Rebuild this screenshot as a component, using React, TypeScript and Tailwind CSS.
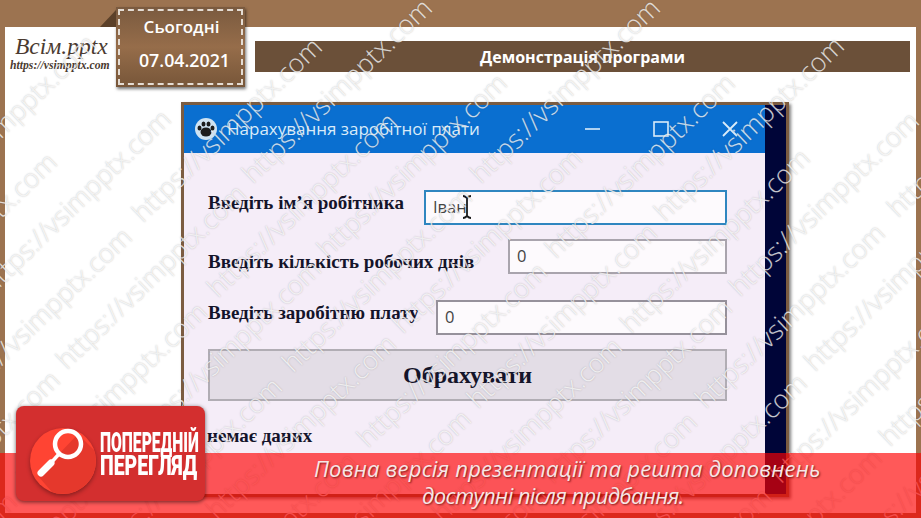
const serif = "font-['Liberation_Serif',serif]";

// two interleaved sets of diagonal watermark rows, x-y and x+y of each text's end
const marks: { x: number; y: number }[] = [];
const addRows = (rows: number[], offset: number) => {
  rows.forEach((p) => {
    for (let q = offset; q < 1500; q += 150) {
      marks.push({ x: (p + q) / 2, y: (q - p) / 2 });
    }
  });
};
addRows([-692, -320, 52, 424, 798, 1172], 130);
addRows([-485, -105, 275, 652, 1035], 58);

function Watermark() {
  return (
    <div aria-hidden className="absolute inset-0 overflow-hidden pointer-events-none">
      {marks
        .filter((m) => m.y > -10 && m.y < 700 && m.x > -10 && m.x < 1100)
        .map((m) => (
          <span
            key={`${m.x}-${m.y}`}
            style={{ left: m.x, top: m.y }}
            className="absolute -translate-x-full -translate-y-1/2 origin-right -rotate-[44deg] whitespace-nowrap font-['Open_Sans',sans-serif] text-[26.5px] font-light leading-none text-white/75 [text-shadow:0_0_1.5px_rgba(90,90,90,0.4)]"
          >
            https://vsimpptx.com
          </span>
        ))}
    </div>
  );
}

function DateTab() {
  return (
    <div className="absolute left-[100px] top-[7px] flex">
      <div className="mt-[3px] h-[17px] w-[16px] bg-[#5b4029] [clip-path:polygon(100%_0,100%_100%,0_100%)]" />
      <div className="h-[80px] w-[129px] p-[2px] bg-gradient-to-b from-[#7a5a3f] via-[#966d4a] to-[#775639] shadow-[1px_2px_3px_rgba(0,0,0,0.55)]">
        <div className="flex h-full flex-col items-center gap-[9px] border-2 border-dashed border-[#e4dcd3] pt-[4px] pl-[2px] font-['Open_Sans',sans-serif] text-[17px] font-semibold text-white">
          <span className="leading-6">Сьогодні</span>
          <span className="ml-[6px] text-[17.8px] leading-6">07.04.2021</span>
        </div>
      </div>
    </div>
  );
}

function PawIcon() {
  return (
    <svg width="24" height="24" viewBox="0 0 24 24">
      <circle cx="12" cy="12" r="11" fill="#cfe3f2" />
      <ellipse cx="12" cy="15" rx="5.5" ry="4.5" fill="#1c1c1c" />
      <ellipse cx="5.5" cy="11" rx="2" ry="2.6" fill="#1c1c1c" />
      <ellipse cx="9.5" cy="7" rx="2" ry="2.6" fill="#1c1c1c" />
      <ellipse cx="14.5" cy="7" rx="2" ry="2.6" fill="#1c1c1c" />
      <ellipse cx="18.5" cy="11" rx="2" ry="2.6" fill="#1c1c1c" />
    </svg>
  );
}

function Field({ text, className }: { text: string; className: string }) {
  return (
    <div className={`relative flex h-[35px] items-center bg-[#fdfafd] pl-[7px] font-['Open_Sans',sans-serif] text-[16.5px] font-normal text-[#444] border-2 ${className}`}>
      {text}
    </div>
  );
}

function AppWindow() {
  return (
    <div className="ml-[176px] flex h-[395px] w-[608px] border-[3px] border-[#7b5c41] shadow-[2px_2px_3px_rgba(0,0,0,0.5)]">
      <div className="w-[581px] bg-[#f5edf8]">
        {/* Title bar */}
        <div className="flex h-[48px] items-center bg-[#0a6fd0] pl-[10px] text-[#d9ebf9]">
          <PawIcon />
          <span className="ml-[9px] font-['Open_Sans',sans-serif] text-[17px]">Нарахування заробітної плати</span>
          <svg width="16" height="16" viewBox="0 0 16 16" className="ml-[105px]" fill="none" stroke="currentColor" strokeWidth="1.6">
            <path d="M0 8h15" />
          </svg>
          <svg width="16" height="16" viewBox="0 0 16 16" className="ml-[52px]" fill="none" stroke="currentColor" strokeWidth="1.6">
            <rect x="1" y="1" width="14" height="14" />
          </svg>
          <svg width="16" height="16" viewBox="0 0 16 16" className="ml-[53px]" fill="none" stroke="currentColor" strokeWidth="1.8">
            <path d="M1 1l14 14M15 1L1 15" />
          </svg>
        </div>
        {/* Form */}
        <div className={`pl-[24px] pr-[38px] pt-[37px] font-bold text-[#14142a] ${serif}`}>
          <div className="flex items-start justify-between">
            <span className="text-[19px] leading-[26px]">Введіть ім’я робітника</span>
            <div className="relative w-[303px]">
              <Field text="Іван" className="border-[#2f86c0]" />
              <svg width="12" height="24" viewBox="0 0 12 24" className="absolute left-[37px] top-[5px]" fill="none" stroke="#1a1a1a" strokeWidth="1.8">
                <path d="M2 1c2 0 3 1 4 2 1-1 2-2 4-2M6 3v18M2 23c2 0 3-1 4-2 1 1 2 2 4 2" />
              </svg>
            </div>
          </div>
          <div className="mt-[14px] flex items-start justify-between">
            <span className="pt-[11px] text-[19px] leading-[24px]">Введіть кількість робочих днів</span>
            <div className="w-[219px]">
              <Field text="0" className="border-[#a9a4ad]" />
            </div>
          </div>
          <div className="mt-[26px] flex items-start justify-between">
            <span className="text-[19px] leading-[26px]">Введіть заробітню плату</span>
            <div className="w-[291px]">
              <Field text="0" className="border-[#96919b]" />
            </div>
          </div>
          <div className="mt-[14px] flex h-[52px] items-center justify-center border-2 border-[#b1adb4] bg-[#e3dde6] text-[24px]">
            Обрахувати
          </div>
          <div className="mt-[24px] -ml-[1px] text-[19px] leading-[22px]">немає даних</div>
        </div>
      </div>
      <div className="flex-1 bg-[#000538]" />
    </div>
  );
}

function PreviewBadge() {
  return (
    <div className="absolute left-[16px] top-[406px] flex h-[95px] w-[189px] rounded-lg bg-[#d32f2f] shadow-[0_1px_4px_rgba(0,0,0,0.6)]">
      <svg width="70" height="70" viewBox="0 0 70 70" className="ml-[12px] mt-[20px] drop-shadow-[0_2px_2px_rgba(0,0,0,0.35)]">
        <circle cx="35" cy="35" r="33" fill="#ff4433" />
        <path d="M50 8L66 24A33 33 0 0 1 24 66L10 50Z" fill="#e5382c" />
        <circle cx="40" cy="18" r="13" fill="none" stroke="#fff" strokeWidth="4.5" />
        <path d="M31 28L22 38" stroke="#fff" strokeWidth="3.5" />
        <path d="M23 37L13 47" stroke="#fff" strokeWidth="7" strokeLinecap="round" />
      </svg>
      <div className="ml-[2px] mt-[26px] w-0 whitespace-nowrap font-['Roboto',sans-serif] text-[27px] font-black leading-[23px] text-white">
        <div className="origin-left scale-x-[0.58]">ПОПЕРЕДНІЙ</div>
        <div className="origin-left scale-x-[0.72]">ПЕРЕГЛЯД</div>
      </div>
    </div>
  );
}

export default function App() {
  return (
    <div className="relative flex h-[518px] w-[921px] flex-col overflow-hidden bg-[#9c7350] px-[5px] pt-[27px] pb-[5px]">
      {/* Slide */}
      <div className="flex-1 bg-white">
        <div className="flex h-[75px] items-start">
          <div className={`w-[111px] pl-[6px] pt-[6px] italic text-[#4a3a30] ${serif}`}>
            <div className="pl-[4px] text-[23.5px] leading-[26px]">Всім.pptx</div>
            <div className="-ml-[1px] whitespace-nowrap text-[11.7px] font-bold leading-[14px]">https://vsimpptx.com</div>
          </div>
          <div className="ml-[139px] mt-[14px] flex h-[31px] w-[655px] items-center justify-center bg-[#6b5039] font-['Open_Sans',sans-serif] text-[16px] font-bold text-white">
            Демонстрація програми
          </div>
        </div>
        <AppWindow />
      </div>
      <DateTab />
      <Watermark />

      {/* Red banner */}
      <div className="absolute inset-x-0 top-[453px] bottom-0 bg-[#ff0000]/65">
        <div className="flex flex-col items-start pt-[2px] font-['Open_Sans',sans-serif] text-[22px] italic leading-[27px] text-[#f6e6e6] [text-shadow:1px_1px_2px_rgba(80,0,0,0.7)]">
          <span className="ml-[314px] tracking-[0.2px]">Повна версія презентації та решта доповнень</span>
          <span className="ml-[422px] tracking-[-0.6px]">доступні після придбання.</span>
        </div>
      </div>
      <PreviewBadge />
    </div>
  );
}
